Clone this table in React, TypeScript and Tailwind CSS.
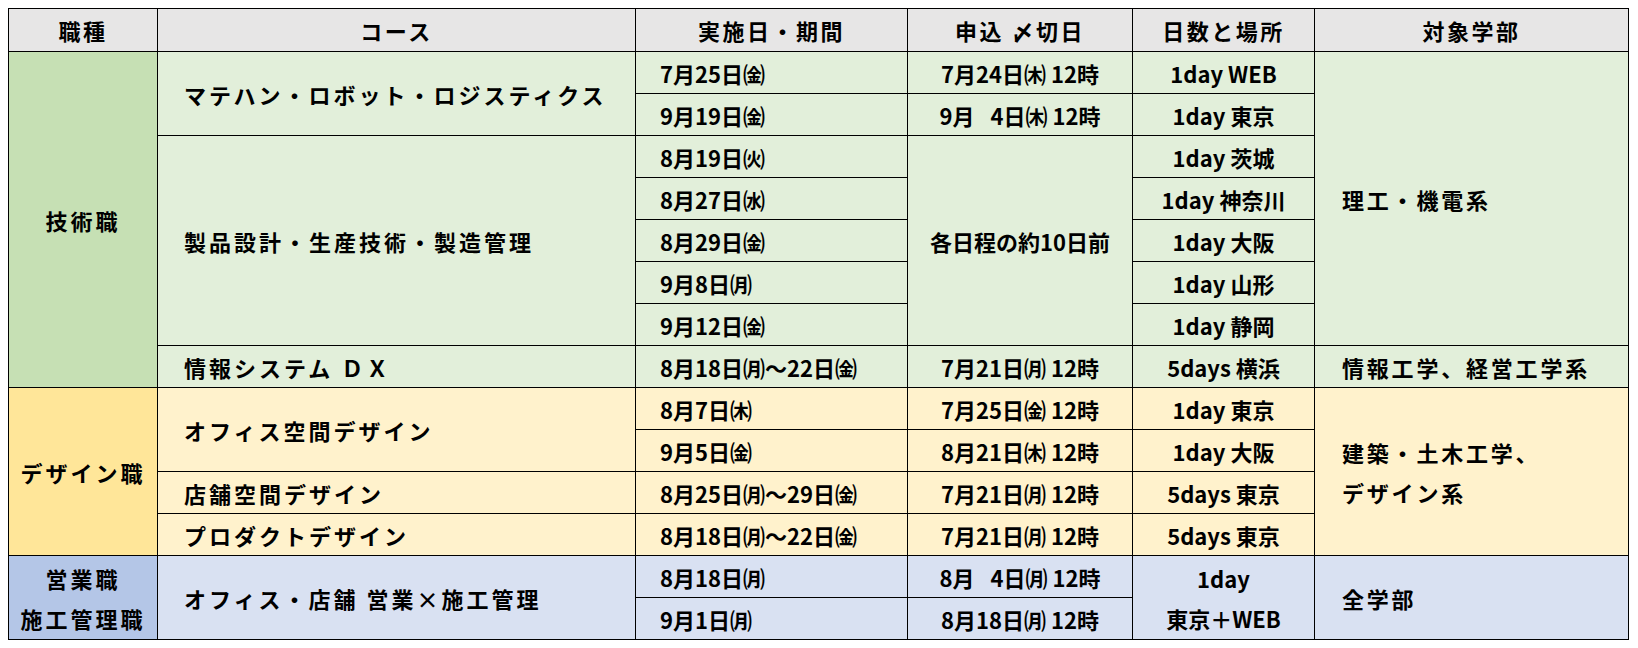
import React from 'react';

// 2025 summer internship schedule table (Excel-style sheet)

const FONT = { fontFamily: '"Noto Sans CJK JP", "Noto Sans", sans-serif' };

const th = 'border border-black bg-[#e7e6e6] text-center font-bold text-[22px] tracking-[2.5px]';
const cell = 'border border-black font-bold text-[22px] leading-[26px] p-0';

// cell variants by column role
const jobCell = `${cell} text-center tracking-[3px] leading-[40px]`;
const courseCell = `${cell} text-left pl-[26px] tracking-[3px]`;
const dateCell = `${cell} text-left pl-[24px] whitespace-pre`;
const deadlineCell = `${cell} text-center whitespace-pre`;
const placeCell = `${cell} text-center leading-[40px]`;
const facultyCell = `${cell} text-left pl-[27px] tracking-[2.8px] leading-[40px]`;

const TECH = 'bg-[#e2efda]';
const TECH_HEAD = 'bg-[#c6e0b4]';
const DESIGN = 'bg-[#fff2cc]';
const DESIGN_HEAD = 'bg-[#ffe699]';
const SALES = 'bg-[#d9e1f2]';
const SALES_HEAD = 'bg-[#b4c6e7]';

// wide gap used in the sheet for single-digit days ("9月  4日")
const GAP = '\u2002 ';

export default function App() {
  return (
    <div className="bg-white w-[1638px] h-[648px] p-2" style={FONT}>
      <table className="table-fixed border-collapse w-[1620px] text-black">
        <colgroup>
          <col className="w-[149px]" />
          <col className="w-[478px]" />
          <col className="w-[272px]" />
          <col className="w-[225px]" />
          <col className="w-[182px]" />
          <col className="w-[314px]" />
        </colgroup>
        <thead>
          <tr className="h-[43px]">
            <th className={th}>職種</th>
            <th className={th}>コース</th>
            <th className={th}>実施日・期間</th>
            <th className={th}>申込 〆切日</th>
            <th className={th}>日数と場所</th>
            <th className={th}>対象学部</th>
          </tr>
        </thead>
        <tbody>
          {/* 技術職 */}
          <tr className="h-[42px]">
            <td rowSpan={8} className={`${jobCell} ${TECH_HEAD}`}>技術職</td>
            <td rowSpan={2} className={`${courseCell} ${TECH}`}>マテハン・ロボット・ロジスティクス</td>
            <td className={`${dateCell} ${TECH}`}>7月25日㈮</td>
            <td className={`${deadlineCell} ${TECH}`}>7月24日㈭ 12時</td>
            <td className={`${placeCell} ${TECH}`}>1day WEB</td>
            <td rowSpan={7} className={`${facultyCell} ${TECH}`}>理工・機電系</td>
          </tr>
          <tr className="h-[42px]">
            <td className={`${dateCell} ${TECH}`}>9月19日㈮</td>
            <td className={`${deadlineCell} ${TECH}`}>{`9月${GAP}4日㈭ 12時`}</td>
            <td className={`${placeCell} ${TECH}`}>1day 東京</td>
          </tr>
          <tr className="h-[42px]">
            <td rowSpan={5} className={`${courseCell} ${TECH}`}>製品設計・生産技術・製造管理</td>
            <td className={`${dateCell} ${TECH}`}>8月19日㈫</td>
            <td rowSpan={5} className={`${deadlineCell} ${TECH}`}>各日程の約10日前</td>
            <td className={`${placeCell} ${TECH}`}>1day 茨城</td>
          </tr>
          <tr className="h-[42px]">
            <td className={`${dateCell} ${TECH}`}>8月27日㈬</td>
            <td className={`${placeCell} ${TECH}`}>1day 神奈川</td>
          </tr>
          <tr className="h-[42px]">
            <td className={`${dateCell} ${TECH}`}>8月29日㈮</td>
            <td className={`${placeCell} ${TECH}`}>1day 大阪</td>
          </tr>
          <tr className="h-[42px]">
            <td className={`${dateCell} ${TECH}`}>9月8日㈪</td>
            <td className={`${placeCell} ${TECH}`}>1day 山形</td>
          </tr>
          <tr className="h-[42px]">
            <td className={`${dateCell} ${TECH}`}>9月12日㈮</td>
            <td className={`${placeCell} ${TECH}`}>1day 静岡</td>
          </tr>
          <tr className="h-[42px]">
            <td className={`${courseCell} ${TECH}`}>情報システム ＤＸ</td>
            <td className={`${dateCell} ${TECH}`}>8月18日㈪～22日㈮</td>
            <td className={`${deadlineCell} ${TECH}`}>7月21日㈪ 12時</td>
            <td className={`${placeCell} ${TECH}`}>5days 横浜</td>
            <td className={`${facultyCell} ${TECH}`}>情報工学、経営工学系</td>
          </tr>

          {/* デザイン職 */}
          <tr className="h-[42px]">
            <td rowSpan={4} className={`${jobCell} ${DESIGN_HEAD}`}>デザイン職</td>
            <td rowSpan={2} className={`${courseCell} ${DESIGN}`}>オフィス空間デザイン</td>
            <td className={`${dateCell} ${DESIGN}`}>8月7日㈭</td>
            <td className={`${deadlineCell} ${DESIGN}`}>7月25日㈮ 12時</td>
            <td className={`${placeCell} ${DESIGN}`}>1day 東京</td>
            <td rowSpan={4} className={`${facultyCell} ${DESIGN}`}>
              建築・土木工学、
              <br />
              デザイン系
            </td>
          </tr>
          <tr className="h-[42px]">
            <td className={`${dateCell} ${DESIGN}`}>9月5日㈮</td>
            <td className={`${deadlineCell} ${DESIGN}`}>8月21日㈭ 12時</td>
            <td className={`${placeCell} ${DESIGN}`}>1day 大阪</td>
          </tr>
          <tr className="h-[42px]">
            <td className={`${courseCell} ${DESIGN}`}>店舗空間デザイン</td>
            <td className={`${dateCell} ${DESIGN}`}>8月25日㈪～29日㈮</td>
            <td className={`${deadlineCell} ${DESIGN}`}>7月21日㈪ 12時</td>
            <td className={`${placeCell} ${DESIGN}`}>5days 東京</td>
          </tr>
          <tr className="h-[42px]">
            <td className={`${courseCell} ${DESIGN}`}>プロダクトデザイン</td>
            <td className={`${dateCell} ${DESIGN}`}>8月18日㈪～22日㈮</td>
            <td className={`${deadlineCell} ${DESIGN}`}>7月21日㈪ 12時</td>
            <td className={`${placeCell} ${DESIGN}`}>5days 東京</td>
          </tr>

          {/* 営業職・施工管理職 */}
          <tr className="h-[42px]">
            <td rowSpan={2} className={`${jobCell} ${SALES_HEAD}`}>
              営業職
              <br />
              施工管理職
            </td>
            <td rowSpan={2} className={`${courseCell} ${SALES}`}>オフィス・店舗 営業×施工管理</td>
            <td className={`${dateCell} ${SALES}`}>8月18日㈪</td>
            <td className={`${deadlineCell} ${SALES}`}>{`8月${GAP}4日㈪ 12時`}</td>
            <td rowSpan={2} className={`${placeCell} ${SALES}`}>
              1day
              <br />
              東京＋WEB
            </td>
            <td rowSpan={2} className={`${facultyCell} ${SALES}`}>全学部</td>
          </tr>
          <tr className="h-[42px]">
            <td className={`${dateCell} ${SALES}`}>9月1日㈪</td>
            <td className={`${deadlineCell} ${SALES}`}>8月18日㈪ 12時</td>
          </tr>
        </tbody>
      </table>
    </div>
  );
}
